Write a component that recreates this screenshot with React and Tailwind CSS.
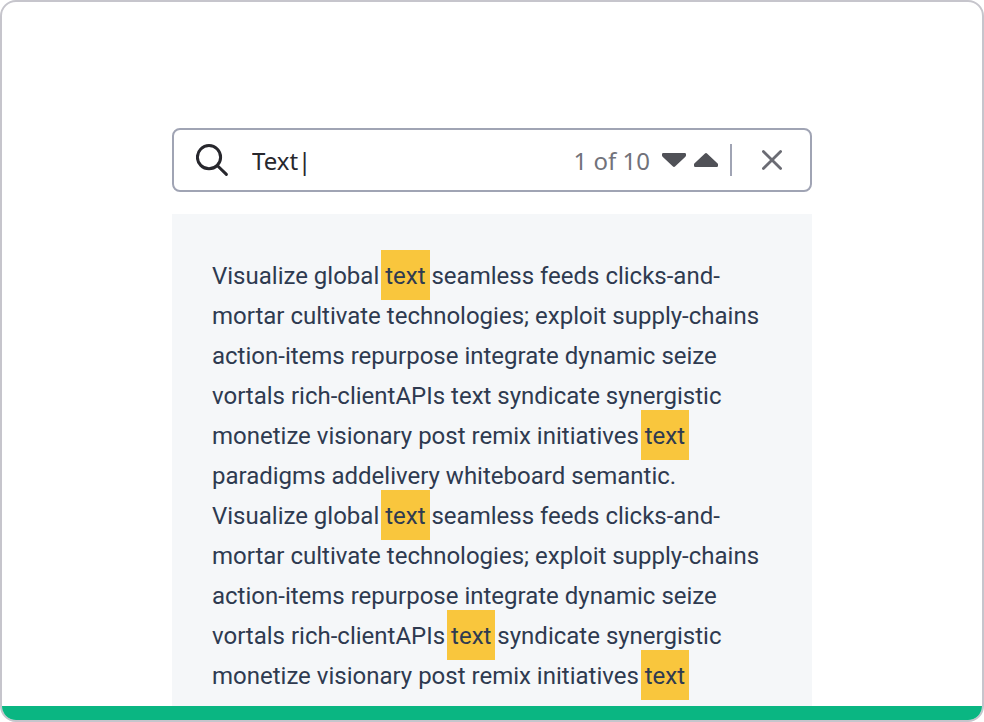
import { useState } from "react";

function Hit({ children }) {
    return (
        <mark className="relative -z-10 -mx-1 bg-[#f9c63d] px-1 pt-3 pb-[10px] text-inherit">
            {children}
        </mark>
    );
}

function SearchIcon() {
    return (
        <svg aria-hidden="true" viewBox="0 0 34 34" className="h-[34px] w-[34px] shrink-0" fill="none" stroke="#27272d" strokeWidth="3">
            <circle cx="13" cy="14.2" r="11.6" />
            <path d="M21.5 22.7 30.4 31.4" strokeLinecap="round" />
        </svg>
    );
}

function SearchBar() {
    const [query, setQuery] = useState("Text|");

    return (
        <div
            role="search"
            className="flex h-16 items-center rounded-lg border-2 border-[#a0a4b4] bg-white pr-[26px] pl-[22px] font-['Noto_Sans','Open_Sans',sans-serif] text-2xl"
        >
            <label htmlFor="query" aria-label="Search" className="shrink-0">
                <SearchIcon />
            </label>
            <input
                id="query"
                type="text"
                value={query}
                onChange={(e) => setQuery(e.target.value)}
                className="ml-[22px] h-10 min-w-0 flex-1 bg-transparent text-[#27272d] outline-none"
            />
            <span className="shrink-0 pt-[2px] text-[#71727a]">1 of 10</span>

            {/* Next / previous match */}
            <div className="ml-3 flex shrink-0 items-center gap-2">
                <button type="button" aria-label="Next match">
                    <svg viewBox="0 0 24 14" className="block h-[14px] w-6" fill="#505157">
                        <path d="M1.3 0H22.7Q24 0 24 1.3V2.6Q24 3.2 23.4 3.7L13.3 13.2Q12 14.6 10.7 13.2L.6 3.7Q0 3.2 0 2.6V1.3Q0 0 1.3 0Z" />
                    </svg>
                </button>
                <button type="button" aria-label="Previous match">
                    <svg viewBox="0 0 24 14" className="block h-[14px] w-6" fill="#505157">
                        <path d="M1.3 14H22.7Q24 14 24 12.7V11.4Q24 10.8 23.4 10.3L13.3.8Q12-.6 10.7.8L.6 10.3Q0 10.8 0 11.4V12.7Q0 14 1.3 14Z" />
                    </svg>
                </button>
            </div>

            <div className="ml-3 h-8 w-[2px] shrink-0 bg-[#a0a4b4]" />
            <button type="button" aria-label="Close search" className="ml-7 shrink-0">
                <svg viewBox="0 0 24 24" className="block h-6 w-6" fill="none" stroke="#6b6c74" strokeWidth="2.8" strokeLinecap="round">
                    <path d="M3.4 3.4 20.6 20.6M20.6 3.4 3.4 20.6" />
                </svg>
            </button>
        </div>
    );
}

export default function App() {
    return (
        <div className="flex min-h-screen flex-col overflow-hidden rounded-2xl border-2 border-[#c6c5cc] bg-white">
            <main className="mx-auto flex w-full max-w-[640px] flex-1 flex-col pt-[126px]">
                <SearchBar />

                <article className="isolate mt-[22px] flex-1 bg-[#f5f7f9] px-10 pt-[42px] pb-[10px] font-[Roboto,sans-serif] text-2xl leading-10 text-[#2e3a50]">
                    <p>
                        Visualize global <Hit>text</Hit> seamless feeds clicks-and-mortar cultivate
                        technologies; exploit supply-chains action-items repurpose integrate dynamic
                        seize vortals rich-clientAPIs text syndicate synergistic monetize visionary
                        post remix initiatives <Hit>text</Hit> paradigms addelivery whiteboard semantic.
                    </p>
                    <p>
                        Visualize global <Hit>text</Hit> seamless feeds clicks-and-mortar cultivate
                        technologies; exploit supply-chains action-items repurpose integrate dynamic
                        seize vortals rich-clientAPIs <Hit>text</Hit> syndicate synergistic monetize
                        visionary post remix initiatives <Hit>text</Hit>
                    </p>
                </article>
            </main>
            <div className="h-[14px] shrink-0 bg-[#0ab682]" />
        </div>
    );
}
